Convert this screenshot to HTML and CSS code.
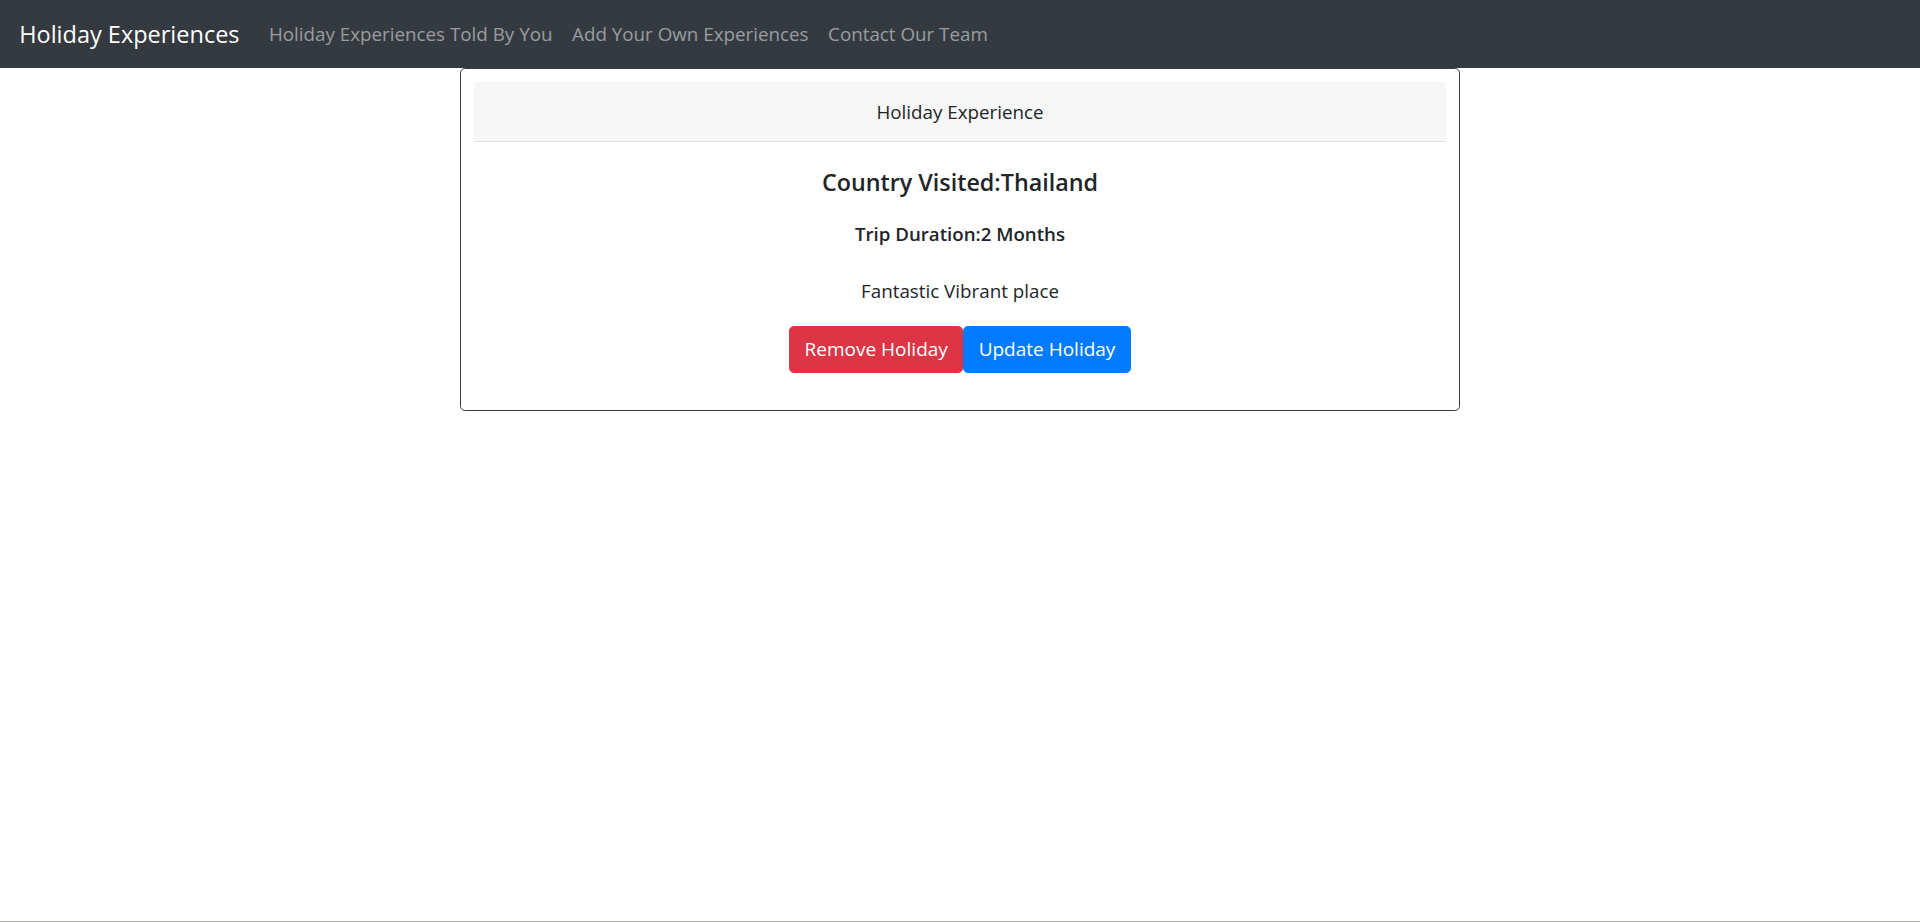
FILE: index.html
```html
<!DOCTYPE html>
<html lang="en">
<head>
<meta charset="utf-8">
<title>Holiday Experiences</title>
<link rel="stylesheet" href="styles.css">
</head>
<body>
<nav class="navbar">
  <a class="brand" href="#">Holiday Experiences</a>
  <ul class="nav-links">
    <li><a href="#">Holiday Experiences Told By You</a></li>
    <li><a href="#">Add Your Own Experiences</a></li>
    <li><a href="#">Contact Our Team</a></li>
  </ul>
</nav>
<main class="container">
  <section class="card">
    <div class="card-header">Holiday Experience</div>
    <div class="card-body">
      <h5 class="title">Country Visited:Thailand</h5>
      <h6 class="duration">Trip Duration:2 Months</h6>
      <p class="desc">Fantastic Vibrant place</p>
      <div class="actions"><button class="btn btn-danger">Remove Holiday</button><button class="btn btn-primary">Update Holiday</button></div>
    </div>
  </section>
</main>
</body>
</html>
```

FILE: styles.css
```css
html, body {
  margin: 0;
  padding: 0;
}
body {
  font-family: "Open Sans", "Noto Sans", sans-serif;
  font-size: 18.8px;
  line-height: 28.8px;
  color: #212529;
  background: #fff;
  min-height: 100vh;
  box-sizing: border-box;
  border-bottom: 1px solid #b0aea8;
}
.navbar {
  display: flex;
  align-items: center;
  height: 68px;
  box-sizing: border-box;
  padding: 9.6px 19.2px;
  background: #343a40;
}
.brand {
  color: #fff;
  text-decoration: none;
  font-size: 23.5px;
  line-height: 36px;
  margin-right: 19.6px;
}
.nav-links {
  display: flex;
  list-style: none;
  margin: 0;
  padding: 0;
}
.nav-links a {
  display: block;
  padding: 0 9.8px;
  color: rgba(255, 255, 255, 0.5);
  text-decoration: none;
}
.container {
  width: 1000px;
  margin: 0 auto;
}
.card {
  border: 1px solid #343a40;
  border-radius: 4.8px;
  padding: 13px;
}
.card-header {
  background: #f7f7f7;
  border-bottom: 1px solid #dfdfdf;
  border-radius: 4px 4px 0 0;
  padding: 16px 24px 14px;
  line-height: 29px;
  text-align: center;
}
.card-body {
  padding: 26.3px 24px 24px;
  text-align: center;
}
.title {
  margin: 0 0 23.2px;
  font-size: 23.3px;
  line-height: 28.8px;
  font-weight: 600;
}
.duration {
  margin: 0 0 28px;
  font-size: 18.7px;
  line-height: 28.8px;
  font-weight: 600;
}
.desc {
  margin: 0 0 20.3px;
}
.actions {
  display: flex;
  justify-content: center;
}
.btn {
  font-family: inherit;
  font-size: 19px;
  line-height: 28.8px;
  padding: 7.9px 14.4px;
  border: 1.2px solid transparent;
  border-radius: 4.8px;
  color: #fff;
  cursor: pointer;
}
.btn-danger {
  background: #dc3545;
  border-color: #dc3545;
}
.btn-primary {
  background: #007bff;
  border-color: #007bff;
}
```
